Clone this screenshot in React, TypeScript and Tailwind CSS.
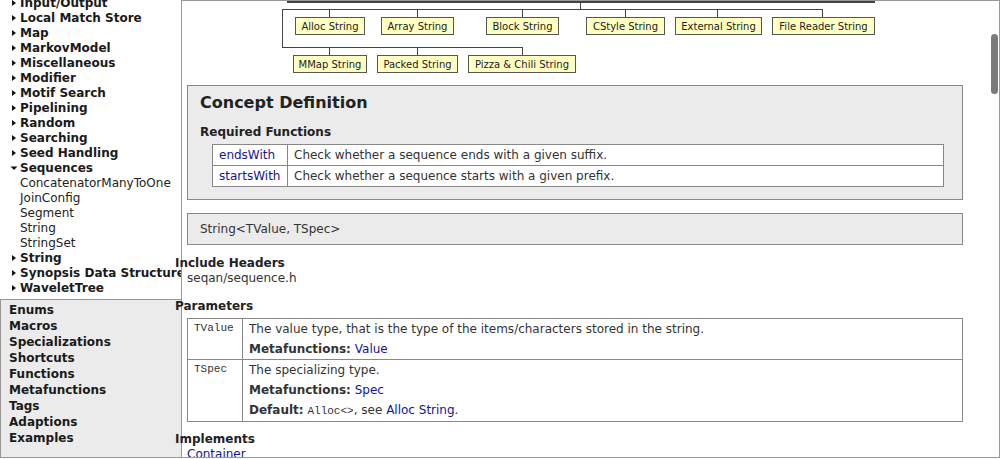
import React from 'react'

const groups = [
  'Input/Output',
  'Local Match Store',
  'Map',
  'MarkovModel',
  'Miscellaneous',
  'Modifier',
  'Motif Search',
  'Pipelining',
  'Random',
  'Searching',
  'Seed Handling',
]

const sequenceChildren = ['ConcatenatorManyToOne', 'JoinConfig', 'Segment', 'String', 'StringSet']

const afterGroups = ['String', 'Synopsis Data Structure', 'WaveletTree']

const kinds = ['Enums', 'Macros', 'Specializations', 'Shortcuts', 'Functions', 'Metafunctions', 'Tags', 'Adaptions', 'Examples']

// node boxes of the specialization diagram, coords relative to the diagram
const nodes = [
  { label: 'Alloc String', left: 113, top: 17, width: 70 },
  { label: 'Array String', left: 199, top: 17, width: 73 },
  { label: 'Block String', left: 304, top: 17, width: 73 },
  { label: 'CStyle String', left: 404, top: 17, width: 79 },
  { label: 'External String', left: 493, top: 17, width: 87 },
  { label: 'File Reader String', left: 590, top: 17, width: 103 },
  { label: 'MMap String', left: 111, top: 55, width: 74 },
  { label: 'Packed String', left: 195, top: 55, width: 81 },
  { label: 'Pizza & Chili String', left: 286, top: 55, width: 108 },
]

const Closed = () => (
  <svg width="8" height="8" viewBox="0 0 8 8" className="shrink-0">
    <path d="M2 1 L6 4 L2 7 Z" fill="#111" />
  </svg>
)

const Open = () => (
  <svg width="8" height="8" viewBox="0 0 8 8" className="shrink-0">
    <path d="M0.5 2.5 L7.5 2.5 L4 6 Z" fill="#111" />
  </svg>
)

const NavGroup = ({ label, open = false }: { label: string; open?: boolean }) => (
  <div className="flex items-center h-[15px] pl-[10px] gap-[2px] whitespace-nowrap">
    {open ? <Open /> : <Closed />}
    <span className="font-bold text-[#1a1a1a]">{label}</span>
  </div>
)

const Link = ({ children }: { children: React.ReactNode }) => (
  <span className="text-[#15158f]">{children}</span>
)

export default function App() {
  return (
    <div className="flex w-[1001px] h-[459px] bg-white text-[12px] text-[#333] font-['DejaVu_Sans',Verdana,sans-serif] overflow-hidden">
      {/* Left navigation frame */}
      <div className="w-[181px] shrink-0 flex flex-col h-[458px] overflow-hidden">
        <div className="h-[300px] border-b border-[#999] overflow-hidden">
          <div className="-mt-[5px]">
            {groups.map((g) => (
              <NavGroup key={g} label={g} />
            ))}
            <NavGroup label="Sequences" open />
            {sequenceChildren.map((c) => (
              <div key={c} className="h-[15px] leading-[16px] pl-[20px] whitespace-nowrap text-[#222]">
                {c}
              </div>
            ))}
            {afterGroups.map((g) => (
              <NavGroup key={g} label={g} />
            ))}
          </div>
        </div>
        <div className="flex-1 bg-[#ebebeb] border-l border-b border-[#999] pt-[2px] pl-[8px]">
          {kinds.map((k) => (
            <div key={k} className="h-[16px] leading-[16px] font-bold text-[#1a1a1a]">
              {k}
            </div>
          ))}
        </div>
      </div>

      {/* Right content frame */}
      <div className="relative w-[819px] h-[458px] shrink-0 border-l border-t border-r border-b border-[#999] overflow-x-visible overflow-y-clip">
        <div className="pl-[5px] w-[780px] -mt-[1px]">
          {/* Specialization diagram */}
          <div className="relative h-[80px]">
            <svg width="775" height="80" className="absolute left-0 top-0" shapeRendering="crispEdges">
              <g stroke="#444" strokeWidth="1" fill="none">
                <line x1="100" y1="1.5" x2="688" y2="1.5" strokeWidth="2" />
                <line x1="393.5" y1="1" x2="393.5" y2="9" />
                <line x1="95" y1="9.5" x2="635" y2="9.5" />
                <line x1="142.5" y1="9" x2="142.5" y2="17" />
                <line x1="230.5" y1="9" x2="230.5" y2="17" />
                <line x1="335.5" y1="9" x2="335.5" y2="17" />
                <line x1="438.5" y1="9" x2="438.5" y2="17" />
                <line x1="530.5" y1="9" x2="530.5" y2="17" />
                <line x1="635.5" y1="9" x2="635.5" y2="17" />
                <line x1="95.5" y1="9" x2="95.5" y2="47" />
                <line x1="95" y1="47.5" x2="336" y2="47.5" />
                <line x1="142.5" y1="47" x2="142.5" y2="55" />
                <line x1="230.5" y1="47" x2="230.5" y2="55" />
                <line x1="335.5" y1="47" x2="335.5" y2="55" />
              </g>
            </svg>
            {nodes.map((n) => (
              <div
                key={n.label}
                className="absolute h-[18px] flex items-center justify-center bg-[#ffffc2] border border-[#555] text-[10px] text-[#222] whitespace-nowrap"
                style={{ left: n.left - 5, top: n.top, width: n.width }}
              >
                {n.label}
              </div>
            ))}
          </div>

          {/* Concept definition */}
          <div className="mt-[5px] w-[776px] bg-[#ebebeb] border border-[#888] pt-[7px] pb-[12px] pl-[12px]">
            <div className="text-[16px] leading-[20px] font-bold text-[#222]">Concept Definition</div>
            <div className="mt-[12px] leading-[15px] font-bold text-[#222]">Required Functions</div>
            <table className="mt-[4px] ml-[12px] w-[732px] bg-white border-collapse">
              <tbody>
                <tr className="h-[21px]">
                  <td className="w-[75px] border border-[#888] px-[6px] leading-[20px]">
                    <Link>endsWith</Link>
                  </td>
                  <td className="border border-[#888] px-[6px] leading-[20px]">Check whether a sequence ends with a given suffix.</td>
                </tr>
                <tr className="h-[21px]">
                  <td className="border border-[#888] px-[6px] leading-[20px]">
                    <Link>startsWith</Link>
                  </td>
                  <td className="border border-[#888] px-[6px] leading-[20px]">Check whether a sequence starts with a given prefix.</td>
                </tr>
              </tbody>
            </table>
          </div>

          {/* Signature */}
          <div className="mt-[13px] w-[776px] h-[32px] bg-[#ebebeb] border border-[#888] pl-[12px] flex items-center">
            String&lt;TValue, TSpec&gt;
          </div>

          <div className="mt-[11px] -ml-[12px] leading-[15px] font-bold text-[#222]">Include Headers</div>
          <div className="leading-[15px]">seqan/sequence.h</div>

          <div className="mt-[13px] -ml-[12px] leading-[15px] font-bold text-[#222]">Parameters</div>
          <table className="mt-[4px] w-[776px] border-collapse">
            <tbody>
              <tr>
                <td className="w-[55px] align-top border border-[#888] px-[6px] leading-[19px] font-['Liberation_Mono',monospace] text-[11px]">
                  TValue
                </td>
                <td className="align-top border border-[#888] px-[6px] leading-[20px]">
                  <div>The value type, that is the type of the items/characters stored in the string.</div>
                  <div>
                    <span className="font-bold">Metafunctions:</span> <Link>Value</Link>
                  </div>
                </td>
              </tr>
              <tr>
                <td className="align-top border border-[#888] px-[6px] leading-[19px] font-['Liberation_Mono',monospace] text-[11px]">
                  TSpec
                </td>
                <td className="align-top border border-[#888] px-[6px] leading-[20px]">
                  <div>The specializing type.</div>
                  <div>
                    <span className="font-bold">Metafunctions:</span> <Link>Spec</Link>
                  </div>
                  <div>
                    <span className="font-bold">Default:</span>{' '}
                    <span className="font-['Liberation_Mono',monospace] text-[11px]">Alloc&lt;&gt;</span>, see{' '}
                    <Link>Alloc String</Link>.
                  </div>
                </td>
              </tr>
            </tbody>
          </table>

          <div className="mt-[10px] -ml-[12px] leading-[15px] font-bold text-[#222]">Implements</div>
          <div className="leading-[15px]">
            <Link>Container</Link>
          </div>
        </div>

        {/* overlay scrollbar thumb */}
        <div className="absolute right-[1px] top-[33px] w-[7px] h-[60px] rounded-full bg-[#7a7a7a]" />
      </div>
    </div>
  )
}
